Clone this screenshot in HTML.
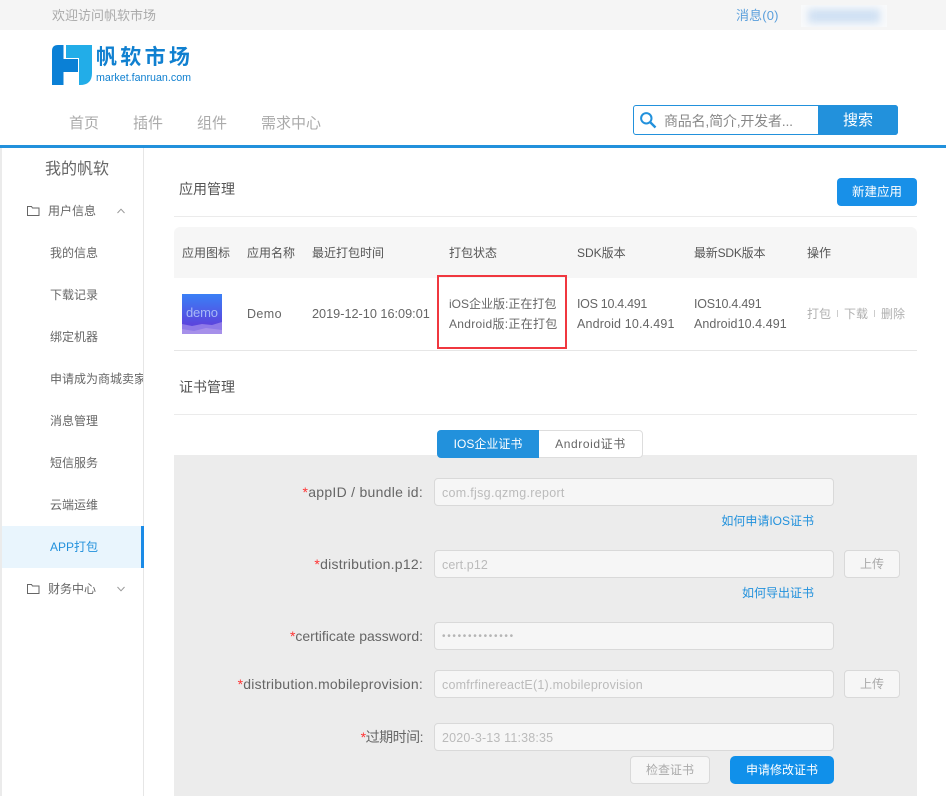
<!DOCTYPE html>
<html lang="zh-CN"><head><meta charset="utf-8"><title>帆软市场</title>
<style>
html,body{margin:0;padding:0;background:#fff}
#p{position:relative;width:946px;height:796px;overflow:hidden;background:#fff;font-family:"Liberation Sans","Noto Sans CJK SC",sans-serif;font-size:12px;color:#666}
#p div,#p span.t{position:absolute;box-sizing:border-box}
.t{white-space:nowrap;line-height:20px;height:20px}
.h{color:#555}
.in{left:434px;width:400px;height:28px;background:#f6f6f6;border:1px solid #d9d9d9;border-radius:4px}
.v{left:442px;color:#bbb;font-size:12.5px}
.l{right:523px;font-size:14px;color:#666}
.l b{color:#f33;font-weight:400}
.up{left:844px;width:56px;height:28px;background:#f6f6f6;border:1px solid #d9d9d9;border-radius:4px;color:#aaa;text-align:center;line-height:26px}
.a{color:#2291dc;right:132px}
.s{left:50px}
.nav{font-size:15px;color:#aaa}
</style></head><body><div id="p">

<div style="left:0;top:0;width:946px;height:30px;background:#f5f5f5"></div>
<span class="t" style="left:52px;top:6px;font-size:13px;color:#aaa">欢迎访问帆软市场</span>
<span class="t" style="left:736px;top:6px;font-size:13px;letter-spacing:.15px;color:#5a9fdc">消息(0)</span>
<div style="left:801px;top:5px;width:86px;height:22px;background:#f9fafb;overflow:hidden"><div style="left:7px;top:4px;width:72px;height:14px;background:#cfe0f3;filter:blur(4px)"></div></div>

<svg style="position:absolute;left:52px;top:45px" width="40" height="40" viewBox="0 0 40 40">
<path d="M11.5 0H6Q0 0 0 6V40H11.5V27H26V14H11.5Z" fill="#0a80d6"/>
<path d="M14 0H40V28Q40 40 28 40H27V13H14Z" fill="#22ade8"/>
</svg>
<span class="t" style="left:96px;top:47px;height:22px;line-height:22px;font-size:21px;font-weight:700;letter-spacing:3.3px;color:#1080d0">帆软市场</span>
<span class="t" style="left:96px;top:68px;font-size:10.7px;color:#1080d0">market.fanruan.com</span>

<span class="t nav" style="left:69px;top:114px">首页</span>
<span class="t nav" style="left:133px;top:114px">插件</span>
<span class="t nav" style="left:197px;top:114px">组件</span>
<span class="t nav" style="left:261px;top:114px">需求中心</span>

<div style="left:633px;top:105px;width:265px;height:30px;border:1px solid #2291dc;border-radius:3px"></div>
<div style="left:818px;top:105px;width:80px;height:30px;background:#2291dc;border-radius:0 3px 3px 0;color:#fff;font-size:15px;text-align:center;line-height:32px">搜索</div>
<svg style="position:absolute;left:639px;top:111px" width="18" height="18" viewBox="0 0 18 18"><circle cx="7.3" cy="7.3" r="5.2" fill="none" stroke="#2291dc" stroke-width="2"/><path d="M11 11L16.5 16.5" stroke="#2291dc" stroke-width="2.4" fill="none"/></svg>
<span class="t" style="left:664px;top:111px;font-size:14px;letter-spacing:-.2px;color:#888">商品名,简介,开发者...</span>

<div style="left:0;top:145px;width:946px;height:3px;background:#2291dc"></div>

<div style="left:0;top:148px;width:2px;height:648px;background:#ebebeb"></div>
<div style="left:143px;top:148px;width:1px;height:648px;background:#e6e6e6"></div>
<span class="t" style="left:45px;top:160px;font-size:16px;color:#666">我的帆软</span>

<svg style="position:absolute;left:27px;top:205px" width="13" height="12" viewBox="0 0 13 12"><path d="M.5 1.5H4.5L5.5 3H12V10.5H.5Z" fill="none" stroke="#666"/></svg>
<span class="t" style="left:48px;top:201px;color:#666">用户信息</span>
<svg style="position:absolute;left:117px;top:208px" width="8" height="6" viewBox="0 0 8 6"><path d="M.5 5L4 1.2L7.5 5" fill="none" stroke="#999"/></svg>

<span class="t s" style="top:243px">我的信息</span>
<span class="t s" style="top:285px">下载记录</span>
<span class="t s" style="top:327px">绑定机器</span>
<div style="left:2px;top:369px;width:141px;height:20px;overflow:hidden"><span class="t" style="left:48px;top:0">申请成为商城卖家</span></div>
<span class="t s" style="top:411px">消息管理</span>
<span class="t s" style="top:453px">短信服务</span>
<span class="t s" style="top:495px">云端运维</span>
<div style="left:2px;top:526px;width:142px;height:42px;background:#e9f5fd"></div>
<div style="left:141px;top:526px;width:3px;height:42px;background:#1a8ae6"></div>
<span class="t s" style="top:537px;color:#2291dc">APP打包</span>

<svg style="position:absolute;left:27px;top:583px" width="13" height="12" viewBox="0 0 13 12"><path d="M.5 1.5H4.5L5.5 3H12V10.5H.5Z" fill="none" stroke="#666"/></svg>
<span class="t" style="left:48px;top:579px;color:#666">财务中心</span>
<svg style="position:absolute;left:117px;top:586px" width="8" height="6" viewBox="0 0 8 6"><path d="M.5 1L4 4.8L7.5 1" fill="none" stroke="#999"/></svg>

<span class="t h" style="left:179px;top:179px;font-size:14px">应用管理</span>
<div style="left:837px;top:178px;width:80px;height:28px;background:#1890e8;border-radius:4px;color:#fff;text-align:center;line-height:28px;font-size:12.5px">新建应用</div>
<div style="left:174px;top:216px;width:743px;height:1px;background:#ebebeb"></div>

<div style="left:174px;top:227px;width:743px;height:51px;background:#f6f6f6;border-radius:6px 6px 0 0"></div>
<span class="t h" style="left:182px;top:243px">应用图标</span>
<span class="t h" style="left:247px;top:243px">应用名称</span>
<span class="t h" style="left:312px;top:243px">最近打包时间</span>
<span class="t h" style="left:449px;top:243px">打包状态</span>
<span class="t h" style="left:577px;top:243px">SDK版本</span>
<span class="t h" style="left:694px;top:243px;letter-spacing:-.2px">最新SDK版本</span>
<span class="t h" style="left:807px;top:243px">操作</span>

<svg style="position:absolute;left:182px;top:294px" width="40" height="40" viewBox="0 0 40 40">
<defs><linearGradient id="g" x1="0" y1="0" x2="0" y2="1"><stop offset="0" stop-color="#3a80f6"/><stop offset=".75" stop-color="#5a46de"/></linearGradient></defs>
<rect width="40" height="40" fill="url(#g)"/>
<path d="M0 30L10 32L20 30L30 31L40 28V40H0Z" fill="#8f7ae8"/>
<path d="M0 35L12 37L24 34L40 36V40H0Z" fill="#a690ea"/>
<text x="4" y="23" textLength="32" font-size="13" fill="#a9b8f6" font-family="Liberation Sans">demo</text>
</svg>
<span class="t" style="left:247px;top:304px;font-size:12.5px;letter-spacing:.4px">Demo</span>
<span class="t" style="left:312px;top:304px;font-size:12.7px">2019-12-10 16:09:01</span>

<span class="t" style="left:449px;top:294px">iOS企业版:正在打包</span>
<span class="t" style="left:449px;top:314px;letter-spacing:.3px">Android版:正在打包</span>
<div style="left:437px;top:275px;width:130px;height:74px;border:2px solid #f0373f"></div>

<span class="t" style="left:577px;top:294px;font-size:12.5px;letter-spacing:-.3px">IOS 10.4.491</span>
<span class="t" style="left:577px;top:314px;font-size:12.5px;letter-spacing:.15px">Android 10.4.491</span>
<span class="t" style="left:694px;top:294px;font-size:12.5px;letter-spacing:-.25px">IOS10.4.491</span>
<span class="t" style="left:694px;top:314px;font-size:12.5px;letter-spacing:.07px">Android10.4.491</span>
<span class="t" style="left:807px;top:304px;color:#b0b0b0">打包</span>
<div style="left:837px;top:310px;width:1px;height:7px;background:#ccc"></div>
<span class="t" style="left:844px;top:304px;color:#b0b0b0">下载</span>
<div style="left:874px;top:310px;width:1px;height:7px;background:#ccc"></div>
<span class="t" style="left:881px;top:304px;color:#b0b0b0">删除</span>
<div style="left:174px;top:350px;width:743px;height:1px;background:#e6e6e6"></div>

<span class="t h" style="left:179px;top:377px;font-size:14px">证书管理</span>
<div style="left:174px;top:414px;width:743px;height:1px;background:#ebebeb"></div>

<div style="left:174px;top:455px;width:743px;height:341px;background:#ececec"></div>
<div style="left:437px;top:430px;width:206px;height:28px;background:#fff;border:1px solid #ddd;border-radius:4px"></div>
<div style="left:437px;top:430px;width:102px;height:28px;background:#2291dc;border-radius:4px 0 0 4px;color:#fff;text-align:center;line-height:29px">IOS企业证书</div>
<div style="left:539px;top:431px;width:103px;height:26px;text-align:center;line-height:27px;letter-spacing:.6px;color:#666">Android证书</div>

<span class="t l" style="top:482px;letter-spacing:.28px"><b>*</b>appID / bundle id:</span>
<div class="in" style="top:478px"></div>
<span class="t v" style="top:483px;letter-spacing:.3px">com.fjsg.qzmg.report</span>
<span class="t a" style="top:511px">如何申请IOS证书</span>

<span class="t l" style="top:554px;letter-spacing:.24px"><b>*</b>distribution.p12:</span>
<div class="in" style="top:550px"></div>
<span class="t v" style="top:555px;letter-spacing:.1px">cert.p12</span>
<div class="up" style="top:550px">上传</div>
<span class="t a" style="top:583px">如何导出证书</span>

<span class="t l" style="top:626px"><b>*</b>certificate password:</span>
<div class="in" style="top:622px"></div>
<span class="t v" style="top:627px;font-size:10px;letter-spacing:1.7px;color:#b5b5b5">••••••••••••••</span>

<span class="t l" style="top:674px;letter-spacing:.24px"><b>*</b>distribution.mobileprovision:</span>
<div class="in" style="top:670px"></div>
<span class="t v" style="top:675px;letter-spacing:.23px">comfrfinereactE(1).mobileprovision</span>
<div class="up" style="top:670px">上传</div>

<span class="t l" style="top:727px;letter-spacing:-.5px"><b>*</b>过期时间:</span>
<div class="in" style="top:723px"></div>
<span class="t v" style="top:728px;letter-spacing:.17px">2020-3-13 11:38:35</span>

<div class="up" style="left:630px;top:756px;width:80px">检查证书</div>
<div style="left:730px;top:756px;width:104px;height:28px;background:#1090ea;border-radius:5px;color:#fff;text-align:center;line-height:28px">申请修改证书</div>

</div></body></html>
